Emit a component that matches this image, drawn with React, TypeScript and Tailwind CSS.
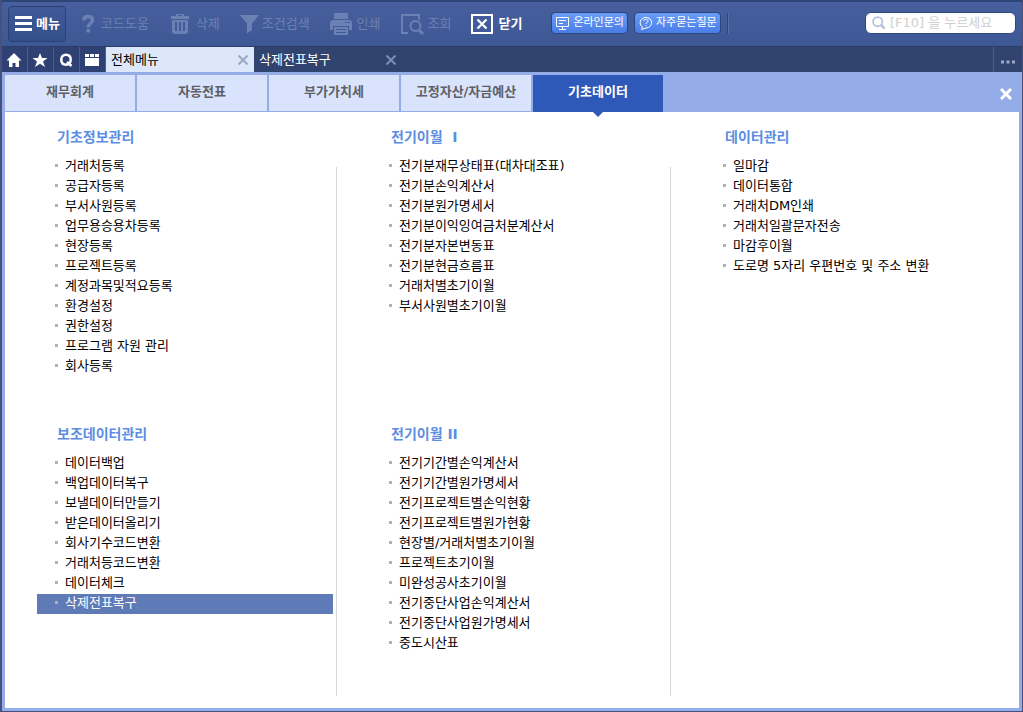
import type { ReactNode } from "react";

type MenuGroup = { title: string; items: string[]; active?: string };

const categories = ["재무회계", "자동전표", "부가가치세", "고정자산/자금예산", "기초데이터"];

const columns: MenuGroup[][] = [
  [
    {
      title: "기초정보관리",
      items: [
        "거래처등록",
        "공급자등록",
        "부서사원등록",
        "업무용승용차등록",
        "현장등록",
        "프로젝트등록",
        "계정과목및적요등록",
        "환경설정",
        "권한설정",
        "프로그램 자원 관리",
        "회사등록",
      ],
    },
    {
      title: "보조데이터관리",
      items: [
        "데이터백업",
        "백업데이터복구",
        "보낼데이터만들기",
        "받은데이터올리기",
        "회사기수코드변환",
        "거래처등코드변환",
        "데이터체크",
        "삭제전표복구",
      ],
      active: "삭제전표복구",
    },
  ],
  [
    {
      title: "전기이월  I",
      items: [
        "전기분재무상태표(대차대조표)",
        "전기분손익계산서",
        "전기분원가명세서",
        "전기분이익잉여금처분계산서",
        "전기분자본변동표",
        "전기분현금흐름표",
        "거래처별초기이월",
        "부서사원별초기이월",
      ],
    },
    {
      title: "전기이월 II",
      items: [
        "전기기간별손익계산서",
        "전기기간별원가명세서",
        "전기프로젝트별손익현황",
        "전기프로젝트별원가현황",
        "현장별/거래처별초기이월",
        "프로젝트초기이월",
        "미완성공사초기이월",
        "전기중단사업손익계산서",
        "전기중단사업원가명세서",
        "중도시산표",
      ],
    },
  ],
  [
    {
      title: "데이터관리",
      items: [
        "일마감",
        "데이터통합",
        "거래처DM인쇄",
        "거래처일괄문자전송",
        "마감후이월",
        "도로명 5자리 우편번호 및 주소 변환",
      ],
    },
  ],
];

function HelpIcon() {
  return (
    <svg width="16" height="24" viewBox="0 0 16 24" fill="none" stroke="currentColor" strokeWidth="3.500">
      <path d="M1.800 8.500C1.800 5.500 3.500 4.500 6 4.500s4.500 1 4.500 3.500c0 3.600-4.300 3.400-4.300 7.500" />
      <path d="M6.200 17v3.500" />
    </svg>
  );
}

function TrashIcon() {
  return (
    <svg width="24" height="24" viewBox="0 0 24 24" fill="currentColor">
      <path
        fillRule="evenodd"
        d="M2 4h5V2h8v2h5v3H2zM9 3v1h4V3zM3 8h16v12l-2 2H5l-2-2zM6 10v9h2v-9zM10 10v9h2v-9zM14 10v9h2v-9z"
      />
    </svg>
  );
}

function FilterIcon() {
  return (
    <svg width="19" height="24" viewBox="0 0 19 24" fill="currentColor">
      <path d="M0 3h19l-7 8.500V18l-5 3.500v-10z" />
    </svg>
  );
}

function PrinterIcon() {
  return (
    <svg width="24" height="24" viewBox="0 0 24 24" fill="currentColor">
      <path d="M4 1h14v6H4z" />
      <path
        fillRule="evenodd"
        d="M2 8h18l2 2v8h-3v-4H3v4H0v-8zM15 10v1h2v-1zM18 10v1h2v-1z"
      />
      <path fillRule="evenodd" d="M4 15h14v8H4zM6 17v1h10v-1zM6 20v1h10v-1z" />
    </svg>
  );
}

function LookupIcon() {
  return (
    <svg width="24" height="24" viewBox="0 0 24 24" fill="none" stroke="currentColor" strokeWidth="2">
      <path d="M7 21H1V3h17v5" />
      <circle cx="14.500" cy="14" r="5" />
      <path d="M18 18l4 4" strokeWidth="3" />
    </svg>
  );
}

function CloseBoxIcon() {
  return (
    <svg width="24" height="24" viewBox="0 0 24 24" fill="none" stroke="currentColor" strokeWidth="2">
      <path d="M1 3h20v18H1z" />
      <path d="M6.500 7.500l9 9M15.500 7.500l-9 9" strokeWidth="2.300" />
    </svg>
  );
}

function CrossIcon() {
  return (
    <svg width="10" height="10" viewBox="0 0 10 10" fill="none" stroke="currentColor" strokeWidth="2">
      <path d="M.5.5l9 9M9.500.5l-9 9" />
    </svg>
  );
}

function ToolButton({ label, icon, on }: { label: string; icon: ReactNode; on?: boolean }) {
  return (
    <button
      type="button"
      disabled={!on}
      className={`flex shrink-0 items-center gap-[3px] ${on ? "font-bold text-white" : "text-[#6c81b3]"}`}
    >
      {icon}
      {label}
    </button>
  );
}

function QuickButton({ label, children }: { label: string; children: ReactNode }) {
  return (
    <button
      type="button"
      aria-label={label}
      className="flex h-[25px] w-[26px] items-center justify-center border-r border-[#4a5e8c] bg-[#2e4172] pr-px text-white"
    >
      <svg width="16" height="16" viewBox="0 0 16 16" fill="currentColor">
        {children}
      </svg>
    </button>
  );
}

function Toolbar() {
  return (
    <header className="flex h-[47px] items-center border-t-2 border-b border-t-[#2f4477] border-b-[#2b3c68] bg-linear-to-b from-[#475f9d] to-[#3e5895] pl-1.5 pr-1.5">
      <button
        type="button"
        className="flex h-9 w-[58px] shrink-0 items-center gap-1 rounded border border-[#2b3f70] bg-linear-to-b from-[#3f5a98] to-[#34508a] pl-1.5 font-bold text-white"
      >
        <svg width="17" height="16" viewBox="0 0 17 16" fill="currentColor">
          <path d="M0 0h17v3H0zM0 6h17v3H0zM0 12h17v3H0z" />
        </svg>
        메뉴
      </button>
      <nav aria-label="도구" className="ml-4 flex items-center gap-5">
        <ToolButton label="코드도움" icon={<HelpIcon />} />
        <ToolButton label="삭제" icon={<TrashIcon />} />
        <ToolButton label="조건검색" icon={<FilterIcon />} />
        <ToolButton label="인쇄" icon={<PrinterIcon />} />
        <ToolButton label="조회" icon={<LookupIcon />} />
        <ToolButton label="닫기" icon={<CloseBoxIcon />} on />
      </nav>
      <div className="ml-[29px] mt-2.5 flex shrink-0 items-center gap-1.5 self-start text-[11px] text-white">
        <button
          type="button"
          className="flex h-[22px] items-center gap-[3px] rounded border border-[#2c4580] bg-linear-to-b from-[#6a9df5] to-[#4a7de6] pl-1 pr-[3px]"
        >
          <svg width="14" height="13" viewBox="0 0 14 13" fill="none" stroke="currentColor">
            <path d="M.5.5h12v9H.5zM3 12.500h7M6.500 10v2M3 3.500h7M3 6.500h4" />
          </svg>
          온라인문의
        </button>
        <button
          type="button"
          className="flex h-[22px] items-center gap-[3px] rounded border border-[#2c4580] bg-linear-to-b from-[#6a9df5] to-[#4a7de6] pl-1 pr-[3px]"
        >
          <svg width="14" height="14" viewBox="0 0 14 14" fill="none" stroke="currentColor">
            <path d="M3.500 11A5.800 5.300 0 1 1 7 12l-4.500 1.500z" />
            <path d="M5 5c0-2.500 4-2.500 4 0 0 1.500-2 1.300-2 3M7 9v1" />
          </svg>
          자주묻는질문
        </button>
        <span className="h-[21px] w-0.5 border-l border-r border-l-[#2f4780] border-r-[#5670ae]" />
      </div>
      <label className="ml-auto mt-2.5 flex h-[22px] w-[151px] items-center gap-1 self-start rounded-md border border-[#2f4780] bg-white pl-1.5">
        <svg width="16" height="16" viewBox="0 0 16 16" fill="none" stroke="#b4c0dd" strokeWidth="2">
          <circle cx="6.500" cy="6.500" r="5.300" />
          <path d="M10.500 10.500l4 4" strokeWidth="3" />
        </svg>
        <input
          type="search"
          aria-label="메뉴 검색"
          placeholder="[F10] 을 누르세요"
          className="w-full min-w-0 bg-transparent placeholder:text-[#cfcfcf] focus:outline-none"
        />
      </label>
    </header>
  );
}

function WindowTabs() {
  return (
    <div className="flex h-[25px] items-center bg-[#31446f] text-white">
      <QuickButton label="홈">
        <path d="M8 1l7.500 7.500H13V15H9.500v-4h-3v4H3V8.500H.5z" />
      </QuickButton>
      <QuickButton label="즐겨찾기">
        <path d="M8 1l2 5h5.500L11 9.500l2 5.500-5-3.300L3 15l2-5.500L.5 6H6z" />
      </QuickButton>
      <QuickButton label="검색">
        <path
          d="M8 2.800c-3 0-4.700 2-4.700 5s1.700 5 4.700 5 4.700-2 4.700-5-1.700-5-4.700-5zM9 10l4.500 4"
          fill="none"
          stroke="currentColor"
          strokeWidth="2.500"
        />
      </QuickButton>
      <QuickButton label="화면">
        <path d="M1 2h4v3H1zM6 2h4v3H6zM11 2h4v3h-4zM1 6h14v8H1z" />
      </QuickButton>
      <div className="flex h-full w-[148px] items-center justify-between bg-[#dce8fa] pl-[5px] pr-1.5">
        <a href="#all" className="text-black">
          전체메뉴
        </a>
        <button type="button" aria-label="전체메뉴 닫기" className="text-[#9aa7c0]">
          <CrossIcon />
        </button>
      </div>
      <div className="flex h-full w-[148px] items-center justify-between pl-[5px] pr-1.5">
        <a href="#restore">삭제전표복구</a>
        <button type="button" aria-label="삭제전표복구 닫기" className="text-[#7b8db8]">
          <CrossIcon />
        </button>
      </div>
      <button
        type="button"
        aria-label="더보기"
        className="ml-auto flex h-full w-[29px] items-center justify-center border-l border-[#4a5e8c] pt-1 text-[#9ba8c6]"
      >
        <svg width="14" height="4" viewBox="0 0 14 4" fill="currentColor">
          <path d="M0 .5h3v3H0zM5.500.5h3v3h-3zM11 .5h3v3h-3z" />
        </svg>
      </button>
    </div>
  );
}

function Group({ group }: { group: MenuGroup }) {
  return (
    <section className="not-last:min-h-[297px]">
      <h2 className="mb-2.5 h-5 whitespace-pre pl-5 text-[14px] leading-5 font-bold text-[#5b8de2]">
        {group.title}
      </h2>
      <ul>
        {group.items.map((item) => (
          <li key={item}>
            <a
              href="#menu"
              className={`flex h-5 items-center gap-[7px] pl-[18px] leading-5 ${
                item === group.active ? "bg-[#5e7ab7] text-white" : "text-black"
              }`}
            >
              <span className="mb-1 size-[3px] shrink-0 bg-[#b0b0b0]" />
              <span className="mb-0.5">{item}</span>
            </a>
          </li>
        ))}
      </ul>
    </section>
  );
}

export default function App() {
  return (
    <div className="flex min-h-screen flex-col bg-[#46517f] pb-px pl-0.5 pr-px font-['DejaVu_Sans','Noto_Sans_CJK_KR',sans-serif] text-[13px] leading-5">
      <Toolbar />
      <WindowTabs />
      <main className="flex flex-1 flex-col border-[3px] border-[#94ade8] bg-white">
        <nav aria-label="메뉴 분류" className="flex h-[37px] items-start gap-0.5 bg-[#94ade8] font-bold">
          {categories.map((name, i) =>
            i === categories.length - 1 ? (
              <button
                key={name}
                type="button"
                className="relative h-[37px] w-[130px] bg-[#2f59b8] pb-1 text-white"
              >
                {name}
                <svg className="absolute top-full left-[60px]" width="10" height="5" viewBox="0 0 10 5">
                  <path d="M0 0h10L5 5z" fill="#2f59b8" />
                </svg>
              </button>
            ) : (
              <button key={name} type="button" className="h-9 w-[130px] bg-[#d9e3fb] pb-[3px] text-[#5d6069]">
                {name}
              </button>
            ),
          )}
          <button type="button" aria-label="닫기" className="ml-auto mr-[7px] mt-[13px] text-white">
            <svg width="12" height="12" viewBox="0 0 12 12" fill="none" stroke="currentColor" strokeWidth="3">
              <path d="M1 1l10 10M11 1L1 11" />
            </svg>
          </button>
        </nav>
        <div className="grid flex-1 grid-cols-[331fr_1px_333fr_1px_348fr]">
          {columns.map((groups, i) => (
            <div key={groups[0].title} className="contents">
              {i > 0 && <div className="mt-[55px] mb-3 bg-[#d9d9d9]" />}
              <div className={i === 0 ? "pt-[15px] pl-8 pr-[3px]" : "pt-[15px] pl-[34px] pr-[3px]"}>
                {groups.map((group) => (
                  <Group key={group.title} group={group} />
                ))}
              </div>
            </div>
          ))}
        </div>
      </main>
    </div>
  );
}
